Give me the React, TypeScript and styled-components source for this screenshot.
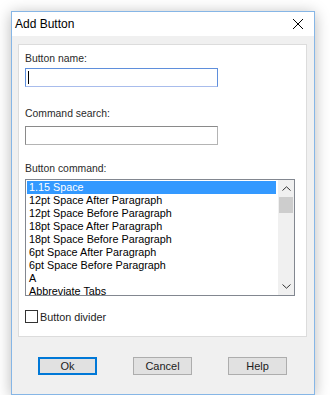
import styled, { createGlobalStyle } from "styled-components";

const GlobalStyle = createGlobalStyle`
  html, body {
    margin: 0;
    padding: 0;
    background: #ffffff;
  }
  body {
    font-family: "Liberation Sans", Arial, sans-serif;
  }
`;

const Page = styled.div`
  padding: 11px 0 0 11px;
`;

const Window = styled.div`
  box-sizing: border-box;
  width: 304px;
  height: 384px;
  border: 1px solid #86b6e6;
  background: #f0f0f0;
  box-shadow: 0 2px 14px rgba(0, 0, 0, 0.28);
  display: flex;
  flex-direction: column;
`;

const TitleBar = styled.div`
  height: 24px;
  background: #ffffff;
  display: flex;
  align-items: center;
  justify-content: space-between;
  padding: 0 11px 0 3px;
  font-size: 12px;
  color: #000;
`;

const CloseIcon = styled.svg`
  width: 10px;
  height: 10px;
`;

const Body = styled.div`
  flex: 1;
  display: flex;
  flex-direction: column;
  padding: 8px 7px 0 6px;
`;

const Panel = styled.div`
  box-sizing: border-box;
  height: 293px;
  background: #ffffff;
  border: 1px solid #dcdcdc;
  padding: 7px 6px 0 6px;
  display: flex;
  flex-direction: column;
  font-size: 10.8px;
  color: #1c1c1c;
`;

const Label = styled.div<{ $top?: number; $gap?: number }>`
  line-height: 13px;
  font-size: 10.4px;
  color: #2a2a2a;
  margin-top: ${(p) => p.$top ?? 0}px;
  margin-bottom: ${(p) => p.$gap ?? 3}px;
`;

const TextBox = styled.div<{ $focused?: boolean }>`
  box-sizing: border-box;
  width: 193px;
  height: 19px;
  border: 1px solid ${(p) => (p.$focused ? "#5f8fdc" : "#8a8a8a")};
  border-bottom-color: ${(p) => (p.$focused ? "#a8bcec" : "#b4b4b4")};
  border-right-color: ${(p) => (p.$focused ? "#5f8fdc" : "#b4b4b4")};
  background: #fff;
  padding: 2px 0 0 2px;
`;

const Caret = styled.span`
  display: block;
  width: 1px;
  height: 13px;
  background: #000;
`;

const ListBox = styled.div`
  box-sizing: border-box;
  width: 270px;
  height: 117px;
  border: 1px solid #828790;
  display: flex;
  overflow: hidden;
`;

const Items = styled.div`
  flex: 1;
  padding: 1px 0 0 1px;
  overflow: hidden;
`;

const Item = styled.div<{ $selected?: boolean }>`
  height: 13px;
  line-height: 13px;
  padding-left: 2px;
  white-space: nowrap;
  color: ${(p) => (p.$selected ? "#fff" : "#000")};
  background: ${(p) => (p.$selected ? "#3399ff" : "transparent")};
  margin-right: ${(p) => (p.$selected ? "2px" : "0")};
`;

const ScrollBar = styled.div`
  width: 16px;
  background: #f0f0f0;
  display: flex;
  flex-direction: column;
`;

const Arrow = styled.div`
  height: 17px;
  display: flex;
  align-items: center;
  justify-content: center;
`;

const Thumb = styled.div`
  height: 16px;
  background: #cdcdcd;
  margin: 0 1px;
`;

const Track = styled.div`
  flex: 1;
`;

const CheckRow = styled.div`
  display: flex;
  align-items: center;
  gap: 2px;
  margin-top: 14px;
`;

const CheckBox = styled.span`
  box-sizing: border-box;
  width: 13px;
  height: 13px;
  border: 1px solid #333;
  background: #fff;
`;

const ButtonRow = styled.div`
  display: flex;
  padding: 20px 0 0 20px;
  gap: 36px;
`;

const Button = styled.div<{ $default?: boolean }>`
  box-sizing: border-box;
  width: 59px;
  height: 18px;
  display: flex;
  align-items: center;
  justify-content: center;
  font-size: 11px;
  color: #1c1c1c;
  background: #e1e1e1;
  border: ${(p) => (p.$default ? "2px solid #0078d7" : "1px solid #adadad")};
`;

const commands = [
  "1.15 Space",
  "12pt Space After Paragraph",
  "12pt Space Before Paragraph",
  "18pt Space After Paragraph",
  "18pt Space Before Paragraph",
  "6pt Space After Paragraph",
  "6pt Space Before Paragraph",
  "A",
  "Abbreviate Tabs",
];

const Chevron = ({ up }: { up?: boolean }) => (
  <svg width="9" height="5" viewBox="0 0 9 5">
    <path
      d={up ? "M0.5 4.5 L4.5 0.8 L8.5 4.5" : "M0.5 0.5 L4.5 4.2 L8.5 0.5"}
      fill="none"
      stroke="#333"
      strokeWidth="1"
    />
  </svg>
);

export default function App() {
  return (
    <Page>
      <GlobalStyle />
      <Window>
        <TitleBar>
          <span>Add Button</span>
          <CloseIcon viewBox="0 0 10 10">
            <path d="M0 0 L10 10 M10 0 L0 10" stroke="#000" strokeWidth="1" />
          </CloseIcon>
        </TitleBar>
        <Body>
          <Panel>
            <Label>Button name:</Label>
            <TextBox $focused>
              <Caret />
            </TextBox>
            <Label $top={20} $gap={6}>
              Command search:
            </Label>
            <TextBox />
            <Label $top={17} $gap={4}>
              Button command:
            </Label>
            <ListBox>
              <Items>
                {commands.map((c, i) => (
                  <Item key={c} $selected={i === 0}>
                    {c}
                  </Item>
                ))}
              </Items>
              <ScrollBar>
                <Arrow>
                  <Chevron up />
                </Arrow>
                <Thumb />
                <Track />
                <Arrow>
                  <Chevron />
                </Arrow>
              </ScrollBar>
            </ListBox>
            <CheckRow>
              <CheckBox />
              <span>Button divider</span>
            </CheckRow>
          </Panel>
          <ButtonRow>
            <Button $default>Ok</Button>
            <Button>Cancel</Button>
            <Button>Help</Button>
          </ButtonRow>
        </Body>
      </Window>
    </Page>
  );
}
